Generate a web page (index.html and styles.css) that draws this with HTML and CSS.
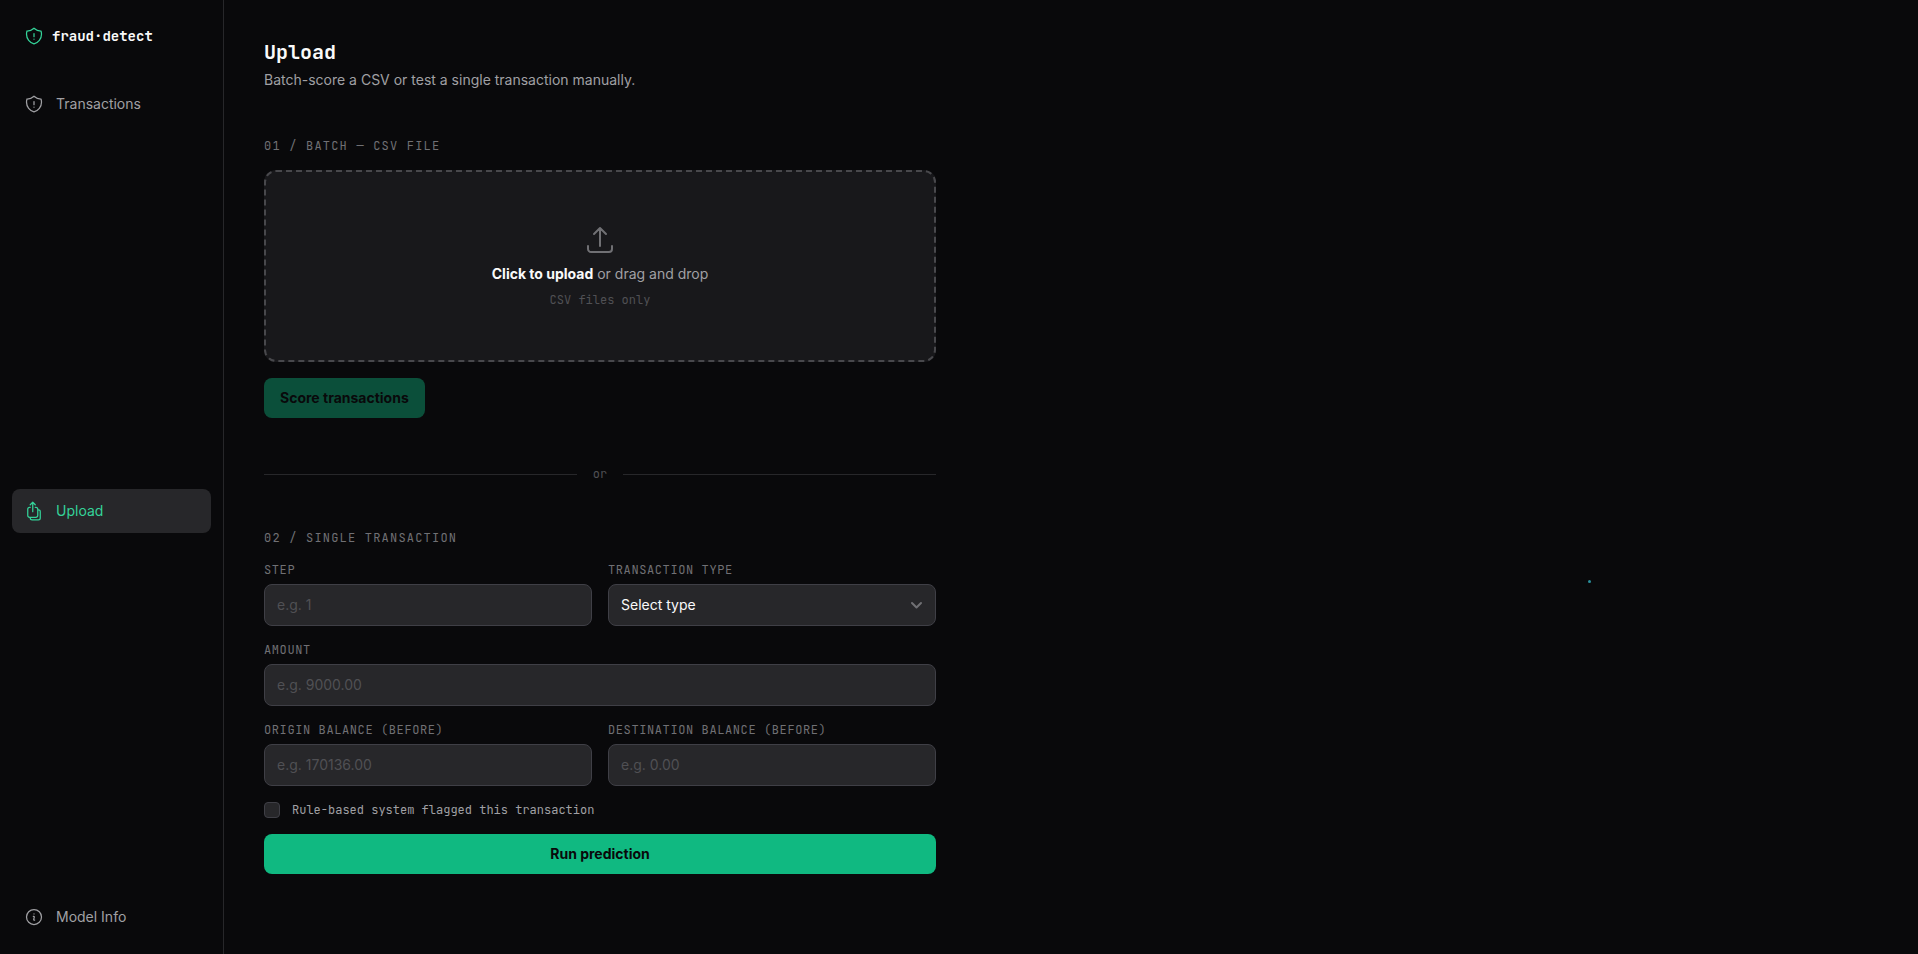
FILE: index.html
```html
<!DOCTYPE html>
<html lang="en">
<head>
<meta charset="utf-8">
<meta name="viewport" content="width=device-width, initial-scale=1">
<title>fraud·detect</title>
<link rel="stylesheet" href="styles.css">
</head>
<body>
<div class="app">
  <aside class="sidebar">
    <div class="brand">
      <svg class="icon icon-accent" viewBox="0 0 24 24" aria-hidden="true"><path d="M12 9v3.75m0-10.036A11.959 11.959 0 0 1 3.598 6 11.99 11.99 0 0 0 3 9.75c0 5.592 3.824 10.29 9 11.622 5.176-1.332 9-6.03 9-11.622 0-1.31-.21-2.57-.598-3.75h-.152c-3.196 0-6.1-1.25-8.25-3.286Zm0 13.036h.008v.008H12v-.008Z"/></svg>
      <span class="brand-name">fraud·detect</span>
    </div>
    <nav class="nav">
      <a class="nav-link" href="#transactions">
        <svg class="icon" viewBox="0 0 24 24" aria-hidden="true"><path d="M12 9v3.75m0-10.036A11.959 11.959 0 0 1 3.598 6 11.99 11.99 0 0 0 3 9.75c0 5.592 3.824 10.29 9 11.622 5.176-1.332 9-6.03 9-11.622 0-1.31-.21-2.57-.598-3.75h-.152c-3.196 0-6.1-1.25-8.25-3.286Zm0 13.036h.008v.008H12v-.008Z"/></svg>
        Transactions
      </a>
      <a class="nav-link nav-link-active" href="#upload" aria-current="page">
        <svg class="icon" viewBox="0 0 24 24" aria-hidden="true"><path d="M7.5 7.5h-.75A2.25 2.25 0 0 0 4.5 9.75v7.5a2.25 2.25 0 0 0 2.25 2.25h7.5a2.25 2.25 0 0 0 2.25-2.25v-7.5a2.25 2.25 0 0 0-2.25-2.25h-.75m0-3-3-3m0 0-3 3m3-3v11.25m6-2.25h.75a2.25 2.25 0 0 1 2.25 2.25v7.5a2.25 2.25 0 0 1-2.25 2.25h-7.5a2.25 2.25 0 0 1-2.25-2.25v-.75"/></svg>
        Upload
      </a>
      <a class="nav-link" href="#model-info">
        <svg class="icon" viewBox="0 0 24 24" aria-hidden="true"><path d="m11.25 11.25.041-.02a.75.75 0 0 1 1.063.852l-.708 2.836a.75.75 0 0 0 1.063.853l.041-.021M21 12a9 9 0 1 1-18 0 9 9 0 0 1 18 0Zm-9-3.75h.008v.008H12V8.25Z"/></svg>
        Model Info
      </a>
    </nav>
  </aside>

  <main class="main">
    <div class="content">
      <header class="page-header">
        <h1 class="page-title">Upload</h1>
        <p class="page-subtitle">Batch-score a CSV or test a single transaction manually.</p>
      </header>

      <form class="section batch">
        <h2 class="section-label">01 / BATCH — CSV FILE</h2>
        <label class="dropzone" for="csv">
          <svg class="icon icon-large" viewBox="0 0 24 24" aria-hidden="true"><path d="M3 16.5v2.25A2.25 2.25 0 0 0 5.25 21h13.5A2.25 2.25 0 0 0 21 18.75V16.5m-13.5-9L12 3m0 0 4.5 4.5M12 3v13.5"/></svg>
          <span class="dropzone-text"><strong class="dropzone-action">Click to upload</strong> or drag and drop</span>
          <span class="dropzone-hint">CSV files only</span>
          <input class="file-input" id="csv" type="file" accept=".csv">
        </label>
        <button class="button" type="submit" disabled>Score transactions</button>
      </form>

      <div class="divider">or</div>

      <form class="section">
        <h2 class="section-label">02 / SINGLE TRANSACTION</h2>
        <div class="fields">
          <div class="field">
            <label class="field-label" for="step">STEP</label>
            <input class="control" id="step" type="text" inputmode="numeric" placeholder="e.g. 1">
          </div>
          <div class="field">
            <label class="field-label" for="type">TRANSACTION TYPE</label>
            <div class="select-wrap">
              <select class="control select" id="type">
                <option>Select type</option>
              </select>
              <svg class="icon chevron" viewBox="0 0 16 16" aria-hidden="true"><path d="m4 6 4.5 4.5L13 6"/></svg>
            </div>
          </div>
          <div class="field field-wide">
            <label class="field-label" for="amount">AMOUNT</label>
            <input class="control" id="amount" type="text" inputmode="decimal" placeholder="e.g. 9000.00">
          </div>
          <div class="field">
            <label class="field-label" for="origin">ORIGIN BALANCE (BEFORE)</label>
            <input class="control" id="origin" type="text" inputmode="decimal" placeholder="e.g. 170136.00">
          </div>
          <div class="field">
            <label class="field-label" for="destination">DESTINATION BALANCE (BEFORE)</label>
            <input class="control" id="destination" type="text" inputmode="decimal" placeholder="e.g. 0.00">
          </div>
        </div>
        <div class="check">
          <input class="checkbox" id="flagged" type="checkbox">
          <label class="check-label" for="flagged">Rule-based system flagged this transaction</label>
        </div>
        <button class="button" type="submit">Run prediction</button>
      </form>
    </div>
    <span class="spark" aria-hidden="true"></span>
  </main>
</div>
</body>
</html>
```

FILE: styles.css
```css
:root {
  --bg: #09090b;
  --surface: #18181b;
  --raised: #27272a;
  --line: #3f3f46;
  --dash: #48484c;
  --faint: #505054;
  --muted: #707074;
  --text: #a0a0a4;
  --strong: #fafafa;
  --accent: #10b981;
  --accent-light: #34d399;
  --sans: Inter, "Liberation Sans", sans-serif;
  --mono: "JetBrains Mono", "DejaVu Sans Mono", "Liberation Mono", monospace;
}

* {
  box-sizing: border-box;
}

body {
  margin: 0;
  background: var(--bg);
  color: var(--text);
  font: 14px/20px var(--sans);
}

.app {
  display: flex;
  min-height: 100vh;
}

.icon {
  flex: none;
  width: 20px;
  height: 20px;
  fill: none;
  stroke: currentColor;
  stroke-width: 1.5;
  stroke-linecap: round;
  stroke-linejoin: round;
}

.icon-accent {
  color: var(--accent-light);
}

.icon-large {
  width: 32px;
  height: 32px;
  color: var(--muted);
}

.sidebar {
  display: flex;
  flex: none;
  flex-direction: column;
  width: 224px;
  border-right: 1px solid var(--raised);
}

.brand {
  display: flex;
  align-items: center;
  gap: 8px;
  padding: 26px 24px 24px;
}

.brand-name {
  color: var(--strong);
  font-family: var(--mono);
  font-weight: 700;
}

.nav {
  display: flex;
  flex: 1;
  flex-direction: column;
  justify-content: space-between;
  padding: 12px 12px 15px;
}

.nav-link {
  display: flex;
  align-items: center;
  gap: 12px;
  padding: 12px;
  border-radius: 8px;
  color: var(--text);
  text-decoration: none;
}

.nav-link-active {
  background: var(--raised);
  color: var(--accent-light);
}

.main {
  position: relative;
  flex: 1;
  padding: 40px;
}

.content {
  display: flex;
  flex-direction: column;
  gap: 48px;
  max-width: 672px;
}

.page-title {
  margin: 0 0 6px;
  color: var(--strong);
  font: 700 20px/24px var(--mono);
}

.page-subtitle {
  margin: 0;
}

.section {
  display: flex;
  flex-direction: column;
  gap: 16px;
}

.batch {
  align-items: flex-start;
}

.section-label {
  margin: 0;
  color: var(--muted);
  font: 400 12px/16px var(--mono);
  letter-spacing: 0.1em;
}

.dropzone {
  position: relative;
  display: flex;
  flex-direction: column;
  align-items: center;
  gap: 8px;
  width: 100%;
  padding: 52px 24px;
  border: 2px dashed var(--dash);
  border-radius: 12px;
  background: var(--surface);
  cursor: pointer;
}

.dropzone-action {
  color: var(--strong);
  font-weight: 700;
}

.dropzone-hint {
  color: var(--faint);
  font: 12px/16px var(--mono);
}

.file-input {
  position: absolute;
  inset: 0;
  opacity: 0;
}

.button {
  padding: 10px 16px;
  border: 0;
  border-radius: 8px;
  background: var(--accent);
  color: var(--bg);
  font: 700 14px/20px var(--sans);
  cursor: pointer;
}

.button:disabled {
  opacity: 0.4;
  cursor: default;
}

.divider {
  display: flex;
  align-items: center;
  gap: 16px;
  color: var(--faint);
  font: 12px/16px var(--mono);
}

.divider::before,
.divider::after {
  content: "";
  flex: 1;
  height: 1px;
  background: var(--raised);
}

.fields {
  display: grid;
  grid-template-columns: 1fr 1fr;
  gap: 16px;
}

.field {
  display: flex;
  flex-direction: column;
  gap: 6px;
  min-width: 0;
}

.field-wide {
  grid-column: 1 / -1;
}

.field-label {
  color: var(--muted);
  font: 12px/16px var(--mono);
  letter-spacing: 0.05em;
}

.control {
  width: 100%;
  padding: 10px 12px;
  border: 1px solid var(--line);
  border-radius: 8px;
  background: var(--raised);
  color: var(--strong);
  font: 14px/20px var(--sans);
}

.control::placeholder {
  color: var(--faint);
  opacity: 1;
}

.select-wrap {
  position: relative;
  display: flex;
}

.select {
  appearance: none;
}

.chevron {
  position: absolute;
  top: 0;
  bottom: 0;
  right: 12px;
  width: 16px;
  height: 16px;
  margin: auto 0;
  color: var(--muted);
  stroke-width: 2;
  pointer-events: none;
}

.check {
  display: flex;
  align-items: center;
  gap: 12px;
}

.checkbox {
  appearance: none;
  flex: none;
  width: 16px;
  height: 16px;
  margin: 0;
  border: 1px solid var(--line);
  border-radius: 4px;
  background: var(--raised);
}

.checkbox:checked {
  background: var(--accent);
}

.check-label {
  font: 12px/16px var(--mono);
}

.spark {
  position: absolute;
  top: 580px;
  left: 1364px;
  width: 3px;
  height: 3px;
  border-radius: 50%;
  background: #2a8f9c;
}
```
